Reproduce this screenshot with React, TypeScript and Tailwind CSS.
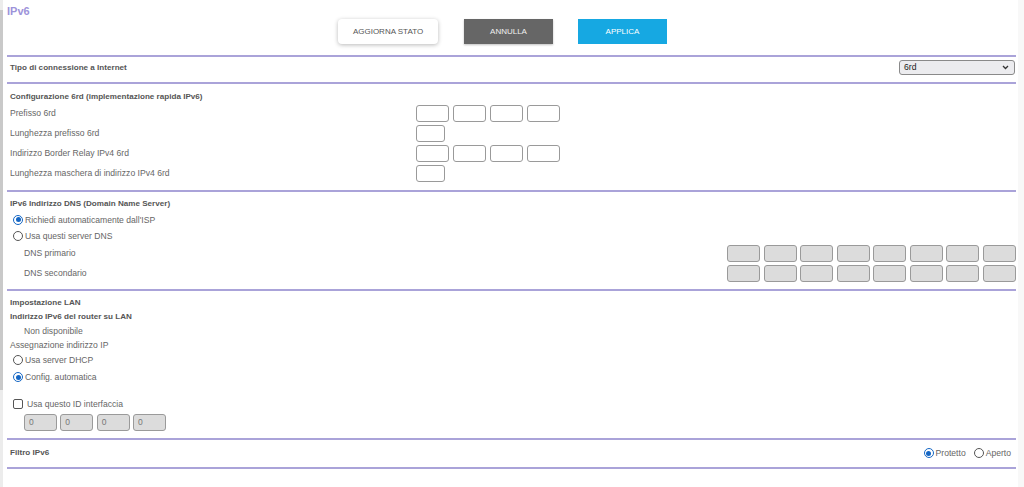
import type { ReactNode } from 'react';

const LINE = 'border-t-2 border-[#aaa3d9]';

function Box({ w = 'w-[33px]', gray, value }: { w?: string; gray?: boolean; value?: string }) {
  return (
    <div
      className={`${w} h-[17px] shrink-0 rounded-[3px] border border-[#9a9a9a] pl-[4px] text-[8.5px] leading-[15px] text-[#777] ${gray ? 'bg-[#dcdcdc]' : 'bg-white'}`}
    >
      {value}
    </div>
  );
}

function Radio({ checked, children }: { checked?: boolean; children: ReactNode }) {
  return (
    <span className="inline-flex items-center gap-[2px]">
      {checked ? (
        <span className="flex h-[10px] w-[10px] items-center justify-center rounded-full border-[1.5px] border-[#1466c4]">
          <span className="h-[5px] w-[5px] rounded-full bg-[#1466c4]" />
        </span>
      ) : (
        <span className="h-[10px] w-[10px] rounded-full border border-[#555]" />
      )}
      <span>{children}</span>
    </span>
  );
}

function Label({ children, bold }: { children: ReactNode; bold?: boolean }) {
  return <span className={bold ? 'text-[8.1px] font-bold text-[#555]' : 'text-[#666]'}>{children}</span>;
}

export default function App() {
  return (
    <div className="flex h-[487px] w-[1024px] overflow-hidden bg-white font-['Liberation_Sans',Arial,sans-serif] text-[8.6px] text-[#666]">
      {/* left scrollbar strip */}
      <div className="w-[3px] shrink-0 bg-[#ececec]">
        <div className="mt-[10px] h-[380px] w-[3px] bg-[#c9c9c9]" />
      </div>

      <main className="ml-[4px] w-[1009px] shrink-0">
        {/* Title */}
        <div className="h-[19px] pt-[3px] text-[11px] font-bold leading-[16px] text-[#9d93da]">IPv6</div>

        {/* Buttons */}
        <div className="ml-[331px] flex h-[25px] items-stretch text-[8px]">
          <button className="w-[100px] rounded-[4px] bg-white text-[#555] shadow-[0_1px_4px_rgba(0,0,0,0.28)]">AGGIORNA STATO</button>
          <button className="ml-[26px] w-[89px] bg-[#666666] text-[#f0f0f0] shadow-[0_1px_2px_rgba(0,0,0,0.25)]">ANNULLA</button>
          <button className="ml-[25px] w-[89px] bg-[#16a8e2] text-white">APPLICA</button>
        </div>

        <div className={`mt-[11px] ${LINE}`} />

        {/* Tipo di connessione */}
        <div className="flex h-[25px] items-start justify-between pt-[3px] pl-[3px]">
          <span className="text-[8.1px] font-bold leading-[15px] text-[#555]">Tipo di connessione a Internet</span>
          <div className="mr-[1px] flex h-[15px] w-[116px] items-center justify-between rounded-[3px] border border-[#8a8a8a] bg-[#ececef] pl-[4px] pr-[5px] text-[8.6px] text-[#222]">
            <span>6rd</span>
            <svg width="7" height="5" viewBox="0 0 7 5" aria-hidden>
              <path d="M1 1l2.5 2.5L6 1" fill="none" stroke="#333" strokeWidth="1.3" />
            </svg>
          </div>
        </div>

        <div className={LINE} />

        {/* 6rd config */}
        <div className="pl-[3px] pt-[5px]">
          <div className="flex h-[16px] items-center">
            <Label bold>Configurazione 6rd (implementazione rapida IPv6)</Label>
          </div>
          {[
            ['Prefisso 6rd', 4, 'w-[33px]'],
            ['Lunghezza prefisso 6rd', 1, 'w-[29px]'],
            ['Indirizzo Border Relay IPv4 6rd', 4, 'w-[33px]'],
            ['Lunghezza maschera di indirizzo IPv4 6rd', 1, 'w-[29px]'],
          ].map(([label, n, w]) => (
            <div key={label as string} className="flex h-[20px] items-start">
              <span className="w-[406px] leading-[17px]">{label}</span>
              <div className="flex gap-[4px]">
                {Array.from({ length: n as number }).map((_, i) => (
                  <Box key={i} w={w as string} />
                ))}
              </div>
            </div>
          ))}
        </div>

        <div className={`mt-[5px] ${LINE}`} />

        {/* DNS */}
        <div className="pl-[3px] pt-[4px]">
          <div className="flex h-[16px] items-center">
            <Label bold>IPv6 Indirizzo DNS (Domain Name Server)</Label>
          </div>
          <div className="flex h-[16px] items-center pl-[3px]">
            <Radio checked>Richiedi automaticamente dall'ISP</Radio>
          </div>
          <div className="flex h-[17px] items-center pl-[3px]">
            <Radio>Usa questi server DNS</Radio>
          </div>
          {['DNS primario', 'DNS secondario'].map((label) => (
            <div key={label} className="flex h-[20px] items-start">
              <span className="pl-[14px] leading-[17px]">{label}</span>
              <div className="ml-auto flex w-[289px] justify-between">
                {Array.from({ length: 8 }).map((_, i) => (
                  <Box key={i} gray />
                ))}
              </div>
            </div>
          ))}
        </div>

        <div className={`mt-[4px] ${LINE}`} />

        {/* LAN */}
        <div className="pl-[3px] pt-[5px]">
          <div className="flex h-[14px] items-center">
            <Label bold>Impostazione LAN</Label>
          </div>
          <div className="flex h-[14px] items-center">
            <Label bold>Indirizzo IPv6 del router su LAN</Label>
          </div>
          <div className="flex h-[14px] items-center pl-[14px]">Non disponibile</div>
          <div className="flex h-[14px] items-center">Assegnazione indirizzo IP</div>
          <div className="flex h-[17px] items-center pl-[3px]">
            <Radio>Usa server DHCP</Radio>
          </div>
          <div className="flex h-[17px] items-center pl-[3px]">
            <Radio checked>Config. automatica</Radio>
          </div>
          <div className="mt-[10px] flex h-[16px] items-center gap-[4px] pl-[3px]">
            <span className="h-[10px] w-[10px] rounded-[2px] border border-[#555]" />
            <span>Usa questo ID interfaccia</span>
          </div>
          <div className="mt-[2px] flex w-[156px] justify-between pl-[14px]">
            {Array.from({ length: 4 }).map((_, i) => (
              <Box key={i} gray value="0" />
            ))}
          </div>
        </div>

        <div className={`mt-[7px] ${LINE}`} />

        {/* Filtro */}
        <div className="flex h-[27px] items-center justify-between pl-[3px] pr-[5px]">
          <Label bold>Filtro IPv6</Label>
          <div className="flex items-center gap-[8px]">
            <Radio checked>Protetto</Radio>
            <Radio>Aperto</Radio>
          </div>
        </div>

        <div className={LINE} />
      </main>

      {/* right strip */}
      <div className="ml-[2px] flex-1 bg-[#f8f8f8]" />
    </div>
  );
}
